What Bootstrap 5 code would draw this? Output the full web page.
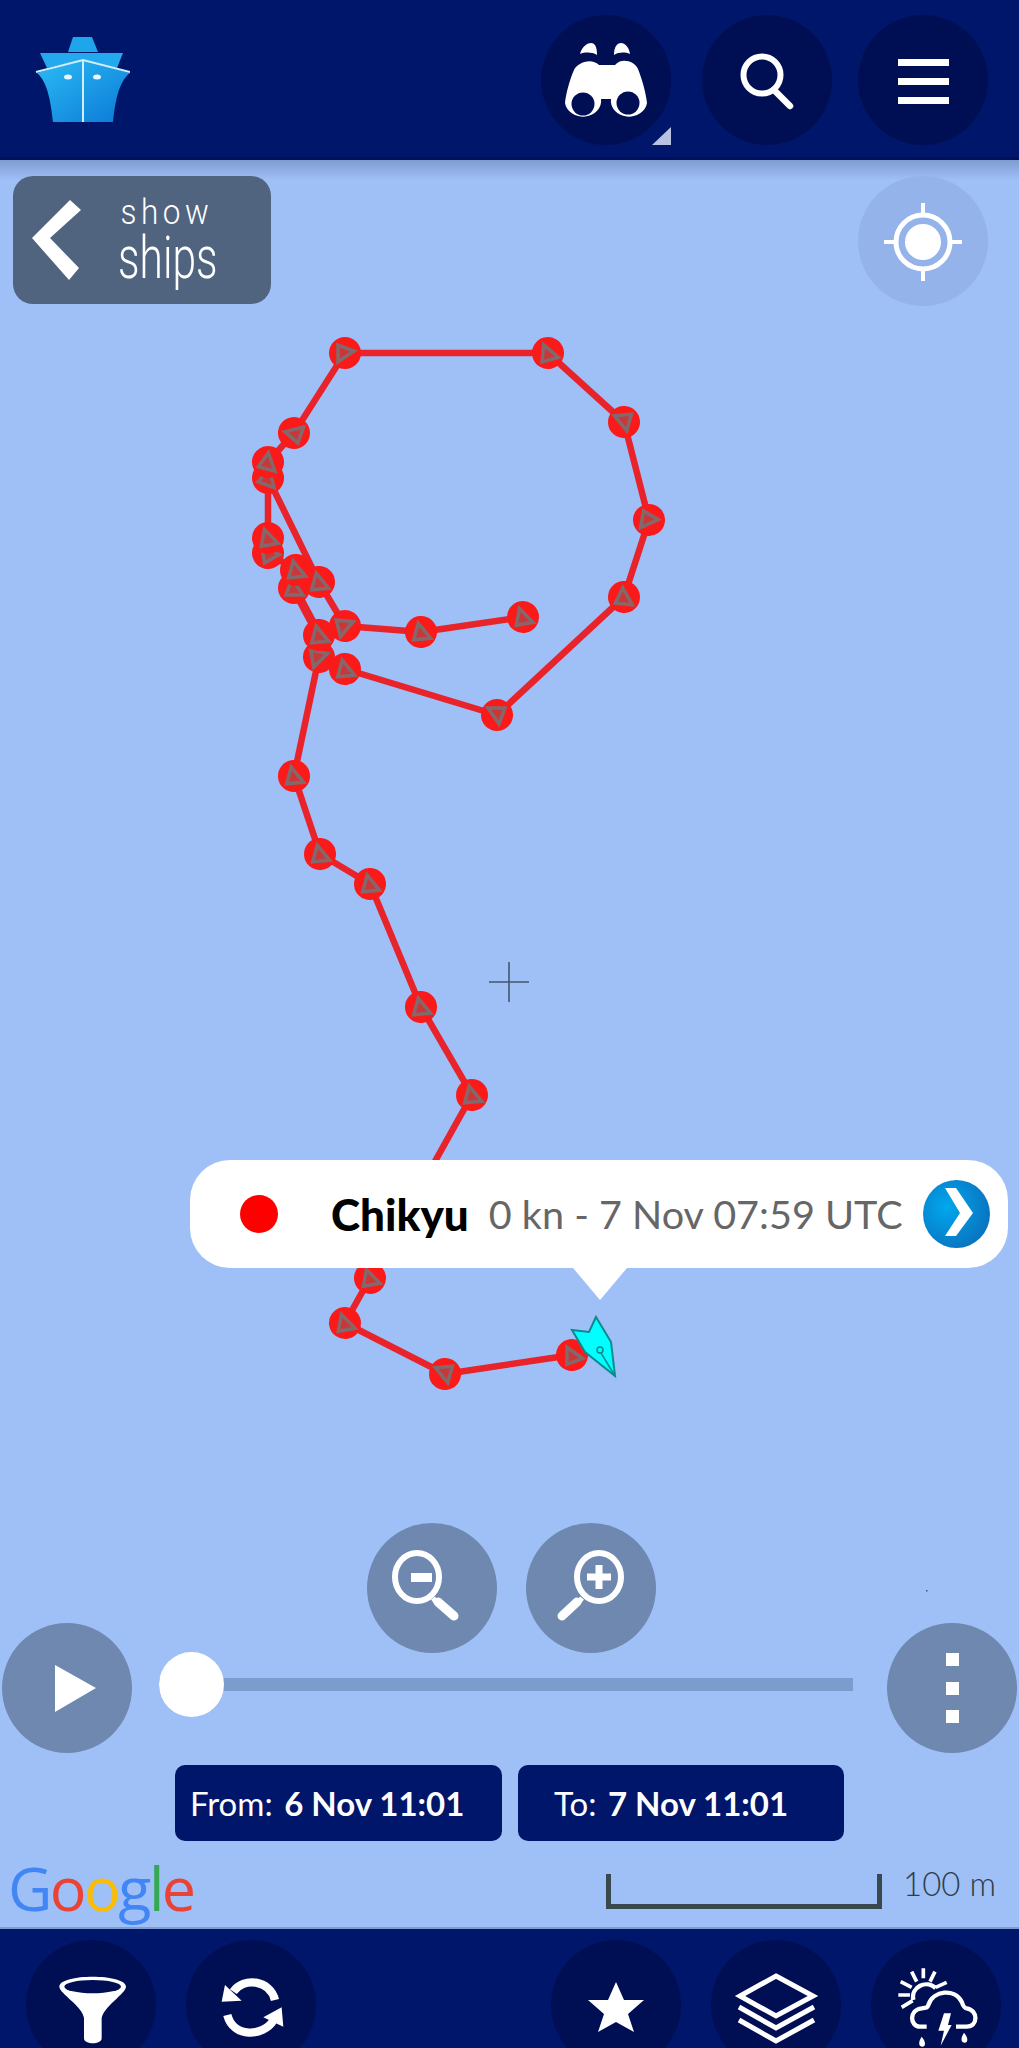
<!DOCTYPE html>
<html lang="en">
<head>
<meta charset="utf-8">
<title>Chikyu track</title>
<link href="https://cdn.jsdelivr.net/npm/bootstrap@5.3.0/dist/css/bootstrap.min.css" rel="stylesheet">
<script src="https://cdn.jsdelivr.net/npm/bootstrap@5.3.0/dist/js/bootstrap.bundle.min.js"></script>
<style>
html,body{margin:0;height:2048px;overflow:hidden;background:#9fbff7;font-family:"Lato","Liberation Sans",sans-serif}
.page-shell{height:2048px}
.top-bar{height:160px;background:#00166a;border-bottom:3px solid #000f5a;padding:15px 31px 0 0;flex:none}
.brand-mark{width:130px;height:130px;margin-right:auto;display:block;margin-top:-15px}
.round-btn{width:130px;height:130px;border-radius:50%;border:0;padding:0;flex:none;display:block;position:relative}
.round-btn svg{display:block;width:130px;height:130px}
.dark-btn{background:#000f54}
.map-btn{background:#6e88b0}
.locate-btn{background:#94b3ea}
.gap-top-a{margin-left:31px}
.gap-top-b{margin-left:26px}
.corner-tri{position:absolute;right:0;bottom:0;width:19px;height:18px;background:#b9c2e0;clip-path:polygon(100% 0,100% 100%,0 100%)}
.map-area{position:relative;flex:1 1 auto;min-height:0;background:#9fbff7}
.track-canvas{position:absolute;left:0;top:0;width:1019px;height:1767px}
.head-shade{position:absolute;left:0;right:0;top:0;height:20px;background:linear-gradient(#7f9ccf,#9fbff7)}
.control-layer{position:relative;height:100%}
.top-controls{padding:16px 31px 0 13px}
.ships-btn{width:258px;height:128px;background:#51647f;border-radius:20px;border:0;padding:0 0 0 19px;color:#fff;overflow:hidden}
.ships-btn svg{width:50px;height:80px;flex:none}
.ships-text{width:122px;margin-left:19px;line-height:1;font-family:Roboto,"Liberation Sans",sans-serif;font-weight:300;text-align:center}
.ships-small{display:block;font-size:35px;line-height:38px;height:38px;letter-spacing:5px;padding-left:11px;transform:scaleX(.9);margin-top:2px}
.ships-big{display:block;font-size:59px;transform:scaleX(.72);line-height:60px;margin-top:-4px}
.zoom-row{gap:29px;margin-bottom:-30px;padding-left:3px;position:relative;z-index:2}
.slider-row{padding:0 2px}
.slider-track{flex:1 1 auto;height:13px;background:#7a9dcd;position:relative;margin:0 34px 8px 27px}
.slider-knob{position:absolute;left:0;top:-26px;width:65px;height:65px;border-radius:50%;background:#fff}
.date-row{gap:16px;margin-top:12px}
.date-chip{height:76px;background:#00166a;color:#fff;border-radius:10px;font-size:33px;line-height:76px;white-space:nowrap;border:0}
.date-from{width:327px;padding-left:15px}
.date-to{width:326px;padding-left:36px}
.date-chip b{font-weight:700;margin-left:3px}
.attr-row{padding:0 23px 0 8px;margin-top:18px;height:68px}
.google-word{font-family:"Open Sans","Liberation Sans",sans-serif;font-size:61px;line-height:68px;letter-spacing:-2.5px;font-weight:400;margin-top:-5px}
.g-blue{color:#4285f4}.g-red{color:#ea4335}.g-yellow{color:#fbbc05}.g-green{color:#34a853}
.scale-wrap{gap:21px}
.scale-bar{width:276px;height:35px;border:5px solid #39484c;border-top:0;margin-top:15px}
.scale-label{font-size:33px;line-height:1;color:#2f3e48;font-weight:300;margin-top:8px}
.ship-popup{position:absolute;left:190px;top:1000px;width:818px;height:108px;background:#fff;border-radius:40px;z-index:3;padding:0 18px 0 50px}
.ship-popup::after{content:"";position:absolute;left:383px;top:108px;border-left:27px solid transparent;border-right:27px solid transparent;border-top:32px solid #fff}
.status-dot{width:38px;height:38px;border-radius:50%;background:#f00;flex:none}
.ship-name{font-size:44px;font-weight:900;color:#000;margin-left:53px;line-height:1}
.ship-meta{font-size:39.6px;color:#666;margin-left:20px;line-height:1;white-space:nowrap;flex:1 1 auto}
.go-btn{width:67px;height:68px;border-radius:50%;background:radial-gradient(circle at 35% 40%,#00a8ee,#0d62b0);border:0;padding:0;flex:none}
.go-btn svg{display:block;width:67px;height:68px}
.bottom-bar{height:121px;background:#00166a;flex:none;overflow:hidden;padding:11px 18px 0 26px;border-top:2px solid #7f9ccf}
.bottom-a{margin-left:30px}
.bottom-b{margin-left:auto}
</style>
</head>
<body>
<div class="page-shell d-flex flex-column">
  <header class="top-bar d-flex align-items-start">
    <svg class="brand-mark" viewBox="0 0 130 130" aria-label="MarineTraffic">
      <defs><linearGradient id="hull" x1="0" y1="0" x2="1" y2="1"><stop offset="0" stop-color="#2bbcf5"/><stop offset="1" stop-color="#0b78d6"/></linearGradient></defs>
      <polygon points="73,37 92,37 98,52 68,52" fill="#1fa5ea"/>
      <polygon points="40,53 123,53 117,68 83,60 47,68" fill="#24a8ee"/>
      <path d="M37 73 83 60 130 73C118 82 115 104 113 122H53C51 104 48 82 37 73Z" fill="url(#hull)"/>
      <path d="M36 72 83 60 130 72M83 60V122" stroke="#cfeeff" stroke-width="2" fill="none"/>
      <ellipse cx="68" cy="77" rx="4" ry="2.5" fill="#e6f6ff"/><ellipse cx="97" cy="77" rx="4" ry="2.5" fill="#e6f6ff"/>
    </svg>
    <button class="round-btn dark-btn" aria-label="Binoculars">
      <svg viewBox="0 0 130 130">
        <path d="M39 39C41 31 47 28 50 28c4 0 6 4 6 12-5-3-12-3-17-1ZM73 40c0-8 3-12 7-12 4 0 8 4 9 11-5-2-11-2-16 1Z" fill="#fff"/>
        <path d="M33 55C36 48 50 42 58 50H74C80 42 94 46 97 54 101 64 105 78 106 88A18 15.500 0 0 1 70 84H60A18 15.500 0 0 1 24 88C25 78 29 64 33 55Z" fill="#fff"/>
        <circle cx="42" cy="89" r="11.500" fill="#000f54"/><circle cx="87" cy="88" r="11.500" fill="#000f54"/>
      </svg>
      <span class="corner-tri"></span>
    </button>
    <button class="round-btn dark-btn gap-top-a" aria-label="Search">
      <svg viewBox="0 0 130 130"><circle cx="60" cy="60" r="18.5" fill="none" stroke="#fff" stroke-width="6"/><path d="M72 75 88 91" stroke="#fff" stroke-width="6.5" stroke-linecap="round"/></svg>
    </button>
    <button class="round-btn dark-btn gap-top-b" aria-label="Menu">
      <svg viewBox="0 0 130 130"><rect x="40" y="44" width="51" height="7" fill="#fff"/><rect x="40" y="63" width="51" height="7" fill="#fff"/><rect x="40" y="82" width="51" height="7" fill="#fff"/></svg>
    </button>
  </header>

  <main class="map-area">
    <div class="head-shade"></div>
    <svg class="track-canvas" viewBox="0 160 1019 1767">
      <defs>
        <g id="nd"><circle r="16" fill="#fb1a1a"/><polygon points="-2,-9 9,7 -8,7" fill="#c8383a" stroke="#83696b" stroke-width="3.500"/></g>
      </defs>
      <g fill="none" stroke="#e8232a" stroke-width="6.500" stroke-linejoin="round">
        <polyline points="523,617 421,632 345,626 319,582 268,478 268,462 294,433 345,353 548,353 624,422 649,520 624,597 497,715 345,669 319,657"/>
        <polyline points="268,478 268,538 268,553 296,570 294,588"/>
        <polyline points="294,588 319,635 319,657" stroke-width="9"/>
        <polyline points="319,657 294,776 320,854 370,884 421,1007 472,1095 370,1278 345,1323 445,1374 572,1355"/>
      </g>
      <use href="#nd" transform="translate(345,353) rotate(90)"/>
      <use href="#nd" transform="translate(548,353) rotate(-15)"/>
      <use href="#nd" transform="translate(624,422) rotate(175)"/>
      <use href="#nd" transform="translate(649,520) rotate(100)"/>
      <use href="#nd" transform="translate(624,597) rotate(5)"/>
      <use href="#nd" transform="translate(497,715) rotate(180)"/>
      <use href="#nd" transform="translate(345,669) rotate(-5)"/>
      <use href="#nd" transform="translate(319,657) rotate(80)"/>
      <use href="#nd" transform="translate(319,635) rotate(-5)"/>
      <use href="#nd" transform="translate(345,626) rotate(75)"/>
      <use href="#nd" transform="translate(421,632) rotate(-5)"/>
      <use href="#nd" transform="translate(523,617) rotate(-10)"/>
      <use href="#nd" transform="translate(319,582) rotate(-5)"/>
      <use href="#nd" transform="translate(294,588) rotate(0)"/>
      <use href="#nd" transform="translate(296,570) rotate(-5)"/>
      <use href="#nd" transform="translate(268,553) rotate(-30)"/>
      <use href="#nd" transform="translate(268,538) rotate(-10)"/>
      <use href="#nd" transform="translate(268,478) rotate(20)"/>
      <use href="#nd" transform="translate(268,462) rotate(15)"/>
      <use href="#nd" transform="translate(294,433) rotate(-70)"/>
      <use href="#nd" transform="translate(294,776) rotate(-5)"/>
      <use href="#nd" transform="translate(320,854) rotate(-5)"/>
      <use href="#nd" transform="translate(370,884) rotate(-5)"/>
      <use href="#nd" transform="translate(421,1007) rotate(-5)"/>
      <use href="#nd" transform="translate(472,1095) rotate(-5)"/>
      <use href="#nd" transform="translate(370,1278) rotate(-10)"/>
      <use href="#nd" transform="translate(345,1323) rotate(-10)"/>
      <use href="#nd" transform="translate(445,1374) rotate(175)"/>
      <use href="#nd" transform="translate(572,1355) rotate(-20)"/>
      <polygon points="596,1317 611,1342 615,1376 585,1352 572,1330 589,1332" fill="#0ff" stroke="#0b8a8c" stroke-width="2"/>
      <circle cx="600" cy="1350" r="3" fill="none" stroke="#0b8a8c" stroke-width="1.5"/>
      <path d="M601 1353 615 1376" stroke="#0b8a8c" stroke-width="1.5"/>
      <path d="M489 982H529M509 962V1002" stroke="#46566c" stroke-width="1.6"/>
      <rect x="926" y="1590" width="1.5" height="1.5" fill="#46566c"/>
    </svg>

    <div class="ship-popup d-flex align-items-center">
      <span class="status-dot"></span>
      <span class="ship-name">Chikyu</span>
      <span class="ship-meta">0 kn - 7 Nov 07:59 UTC</span>
      <button class="go-btn" aria-label="Open">
        <svg viewBox="0 0 67 68"><polygon points="22,8 33,8 50,33 33,56 22,56 37,33" fill="#fff"/></svg>
      </button>
    </div>

    <div class="control-layer d-flex flex-column">
      <div class="top-controls d-flex justify-content-between align-items-start">
        <button class="ships-btn d-flex align-items-center">
          <svg viewBox="0 0 50 80"><polygon points="38,0 49,10 18,38 47,68 37,80 0,38" fill="#fff"/></svg>
          <span class="ships-text"><span class="ships-small">show</span><span class="ships-big">ships</span></span>
        </button>
        <button class="round-btn locate-btn" aria-label="Locate">
          <svg viewBox="0 0 130 130">
            <circle cx="65" cy="66" r="27" fill="none" stroke="#fff" stroke-width="5"/><circle cx="65" cy="66" r="18" fill="#fff"/>
            <path d="M65 27V39M65 93V105M26 66H38M92 66H104" stroke="#fff" stroke-width="4"/>
          </svg>
        </button>
      </div>
      <div class="flex-grow-1"></div>
      <div class="zoom-row d-flex justify-content-center">
        <button class="round-btn map-btn" aria-label="Zoom out">
          <svg viewBox="0 0 130 130"><ellipse cx="50" cy="54" rx="22" ry="24" fill="none" stroke="#fff" stroke-width="6"/><path d="M66 75 69 79" stroke="#fff" stroke-width="5"/><path d="M71 79 87 93" stroke="#fff" stroke-width="9" stroke-linecap="round"/><rect x="44" y="50" width="21" height="9" fill="#fff"/></svg>
        </button>
        <button class="round-btn map-btn" aria-label="Zoom in">
          <svg viewBox="0 0 130 130"><ellipse cx="73" cy="54" rx="22" ry="24" fill="none" stroke="#fff" stroke-width="6"/><path d="M56 75 53 79" stroke="#fff" stroke-width="5"/><path d="M51 79 36 93" stroke="#fff" stroke-width="9" stroke-linecap="round"/><path d="M73 42V66M61 54H85" stroke="#fff" stroke-width="7"/></svg>
        </button>
      </div>
      <div class="slider-row d-flex align-items-center">
        <button class="round-btn map-btn" aria-label="Play">
          <svg viewBox="0 0 130 130"><polygon points="53,42 94,65 53,89" fill="#fff"/></svg>
        </button>
        <div class="slider-track"><span class="slider-knob"></span></div>
        <button class="round-btn map-btn" aria-label="More">
          <svg viewBox="0 0 130 130"><rect x="59" y="30" width="13" height="13" fill="#fff"/><rect x="59" y="59" width="13" height="13" fill="#fff"/><rect x="59" y="87" width="13" height="13" fill="#fff"/></svg>
        </button>
      </div>
      <div class="date-row d-flex justify-content-center">
        <div class="date-chip date-from">From: <b>6 Nov 11:01</b></div>
        <div class="date-chip date-to">To: <b>7 Nov 11:01</b></div>
      </div>
      <div class="attr-row d-flex justify-content-between align-items-start">
        <div class="google-word"><span class="g-blue">G</span><span class="g-red">o</span><span class="g-yellow">o</span><span class="g-blue">g</span><span class="g-green">l</span><span class="g-red">e</span></div>
        <div class="scale-wrap d-flex align-items-start">
          <div class="scale-bar"></div>
          <div class="scale-label">100 m</div>
        </div>
      </div>
    </div>
  </main>

  <footer class="bottom-bar d-flex align-items-start">
    <button class="round-btn dark-btn" aria-label="Filter">
      <svg viewBox="0 0 130 130"><g transform="translate(-6 -10) scale(.3333)"><path d="M118 170C118 130 318 130 318 170 318 190 250 230 245 265V325C245 345 192 345 192 325V265C190 230 118 190 118 170Z" fill="#fff"/><ellipse cx="218" cy="170" rx="85" ry="20" fill="#000f54"/></g></svg>
    </button>
    <button class="round-btn dark-btn bottom-a" aria-label="Refresh">
      <svg viewBox="0 0 130 130"><g transform="translate(-166 -10) scale(.3333)"><g fill="none" stroke="#fff" stroke-width="25"><path d="M640 185C670 140 750 150 765 210"/><path d="M622 255C640 325 730 320 760 272"/></g><polygon points="615,165 605,215 665,212" fill="#fff"/><polygon points="785,232 790,290 730,262" fill="#fff"/></g></svg>
    </button>
    <button class="round-btn dark-btn bottom-b" aria-label="Favourites">
      <svg viewBox="0 0 130 130"><polygon points="65,42 73,60 93,60 77,74 83,92 65,82 47,92 53,74 37,60 57,60" fill="#fff"/></svg>
    </button>
    <button class="round-btn dark-btn bottom-a" aria-label="Layers">
      <svg viewBox="0 0 130 130"><g fill="none" stroke="#fff" stroke-width="5"><polygon points="65,36 102,56 65,76 29,56"/><polyline points="28,67 65,88 103,67"/><polyline points="28,80 65,101 103,80"/></g></svg>
    </button>
    <button class="round-btn dark-btn bottom-a" aria-label="Weather">
      <svg viewBox="0 0 130 130"><g transform="translate(-1 -10) scale(.3333)"><g fill="none" stroke="#fff" stroke-width="13"><path d="M130 210C122 170 170 148 197 175"/><path d="M160 115V145M125 125 140 155M195 125 180 155M92 155 125 172M230 157 197 172M85 195H120M95 232 128 212" stroke-width="11"/><path d="M170 290H150C120 290 115 240 155 235 175 232 170 235 175 225 190 180 255 175 275 215 280 230 285 235 290 235 325 240 325 290 290 290H258"/></g><polygon points="222,250 243,250 234,285 245,285 212,347 222,302 205,302" fill="#fff"/><path d="M155 320c-12 18-8 30 2 30s12-14-2-30ZM282 308c-12 18-8 30 2 30s12-14-2-30Z" fill="#fff"/></g></svg>
    </button>
  </footer>
</div>
</body>
</html>
